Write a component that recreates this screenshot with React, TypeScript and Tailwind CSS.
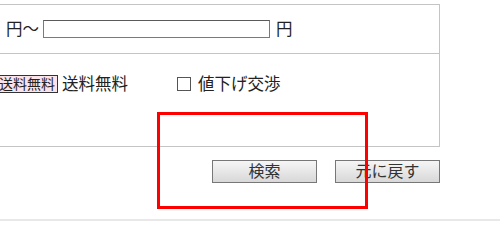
export default function App() {
  return (
    <div
      className="relative w-[500px] h-[230px] overflow-hidden bg-white text-[#222]"
      style={{ fontFamily: '"Liberation Sans", "Noto Sans CJK JP", sans-serif' }}
    >
      {/* search form table, left label column is scrolled out of view */}
      <div className="mt-[4px] w-[440px] border-t border-r border-[#c4c4c4]">
        <div className="flex h-[49px] items-center border-b border-[#c4c4c4] pl-[6px] text-[16.5px]">
          <span>円～</span>
          <input
            type="text"
            className="ml-[4px] h-[18px] w-[227px] border border-[#7a7a7a] border-t-[#5a5a5a] bg-white"
          />
          <span className="ml-[6px]">円</span>
        </div>
        <div className="h-[93px] border-b border-[#c4c4c4] pt-[18px]">
          <div className="flex items-center text-[16.5px]">
            <span className="-ml-[2px] flex h-[18px] items-center border border-[#333] bg-[#fbe3ea] pl-[0px] pr-[2px] text-[14px] leading-none">
              送料無料
            </span>
            <span className="ml-[4px]">送料無料</span>
            <input
              type="checkbox"
              className="ml-[49px] h-[14px] w-[14px] appearance-none border border-[#555] bg-white"
            />
            <span className="ml-[7px]">値下げ交渉</span>
          </div>
        </div>
      </div>

      <div className="mt-[13px] flex w-[440px] justify-end gap-[18px]">
        <button className="h-[23px] w-[105px] border border-[#777] bg-gradient-to-b from-[#f6f6f6] to-[#d8d8d8] text-[16px] leading-none text-[#333]">
          検索
        </button>
        <button className="h-[23px] w-[105px] border border-[#777] bg-gradient-to-b from-[#f6f6f6] to-[#d8d8d8] text-[16px] leading-none text-[#333]">
          元に戻す
        </button>
      </div>

      <div className="mt-[36px] border-t-2 border-[#e8e8e8]" />

      {/* highlight marker */}
      <div className="absolute left-[157px] top-[112px] h-[97px] w-[211px] border-[3px] border-[#ff0000]" />
    </div>
  );
}
